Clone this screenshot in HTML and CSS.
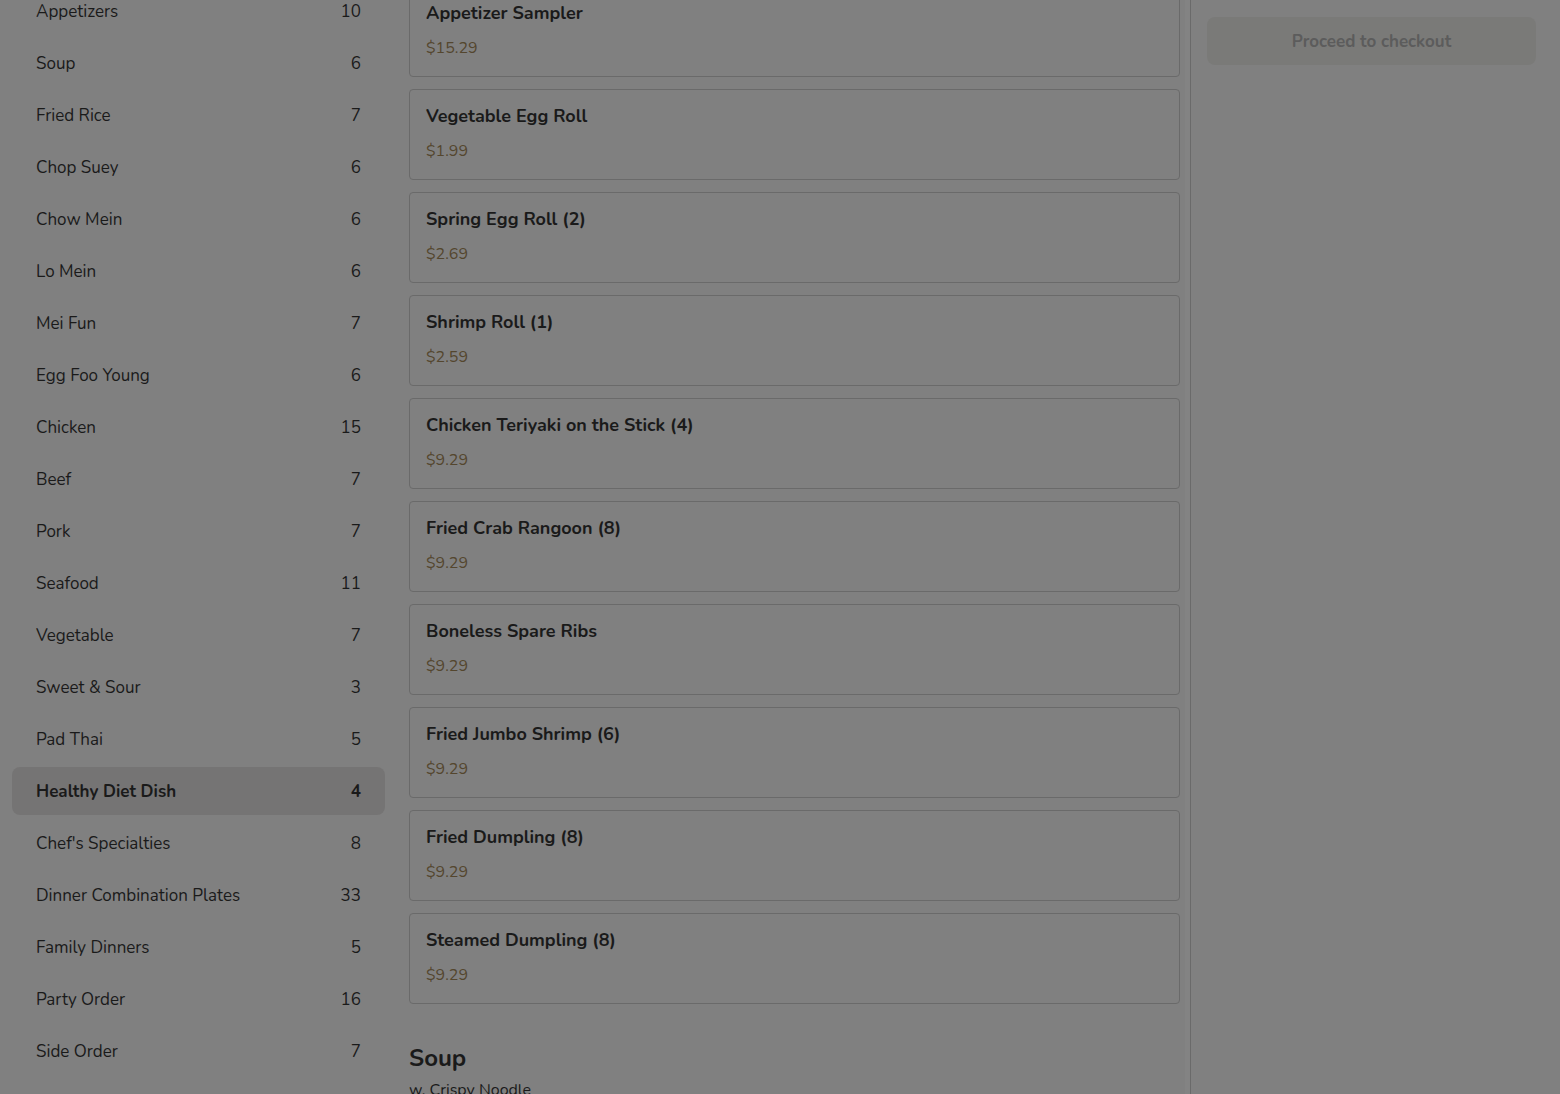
FILE: index.html
```html
<!DOCTYPE html>
<html>
<head>
<meta charset="utf-8">
<link rel="stylesheet" href="styles.css">
</head>
<body>
<div class="layout">
  <nav class="sidebar">
    <div class="cat"><span>Appetizers</span><span>10</span></div>
    <div class="cat"><span>Soup</span><span>6</span></div>
    <div class="cat"><span>Fried Rice</span><span>7</span></div>
    <div class="cat"><span>Chop Suey</span><span>6</span></div>
    <div class="cat"><span>Chow Mein</span><span>6</span></div>
    <div class="cat"><span>Lo Mein</span><span>6</span></div>
    <div class="cat"><span>Mei Fun</span><span>7</span></div>
    <div class="cat"><span>Egg Foo Young</span><span>6</span></div>
    <div class="cat"><span>Chicken</span><span>15</span></div>
    <div class="cat"><span>Beef</span><span>7</span></div>
    <div class="cat"><span>Pork</span><span>7</span></div>
    <div class="cat"><span>Seafood</span><span>11</span></div>
    <div class="cat"><span>Vegetable</span><span>7</span></div>
    <div class="cat"><span>Sweet &amp; Sour</span><span>3</span></div>
    <div class="cat"><span>Pad Thai</span><span>5</span></div>
    <div class="cat active"><span>Healthy Diet Dish</span><span>4</span></div>
    <div class="cat"><span>Chef's Specialties</span><span>8</span></div>
    <div class="cat"><span>Dinner Combination Plates</span><span>33</span></div>
    <div class="cat"><span>Family Dinners</span><span>5</span></div>
    <div class="cat"><span>Party Order</span><span>16</span></div>
    <div class="cat"><span>Side Order</span><span>7</span></div>
  </nav>
  <main class="menu">
    <div class="items">
      <div class="card"><div class="name">Appetizer Sampler</div><div class="price">$15.29</div></div>
      <div class="card"><div class="name">Vegetable Egg Roll</div><div class="price">$1.99</div></div>
      <div class="card"><div class="name">Spring Egg Roll (2)</div><div class="price">$2.69</div></div>
      <div class="card"><div class="name">Shrimp Roll (1)</div><div class="price">$2.59</div></div>
      <div class="card"><div class="name">Chicken Teriyaki on the Stick (4)</div><div class="price">$9.29</div></div>
      <div class="card"><div class="name">Fried Crab Rangoon (8)</div><div class="price">$9.29</div></div>
      <div class="card"><div class="name">Boneless Spare Ribs</div><div class="price">$9.29</div></div>
      <div class="card"><div class="name">Fried Jumbo Shrimp (6)</div><div class="price">$9.29</div></div>
      <div class="card"><div class="name">Fried Dumpling (8)</div><div class="price">$9.29</div></div>
      <div class="card"><div class="name">Steamed Dumpling (8)</div><div class="price">$9.29</div></div>
    </div>
    <h2 class="section">Soup</h2>
    <p class="section-note">w. Crispy Noodle</p>
  </main>
  <div class="track"></div>
  <aside class="cart">
    <button class="checkout">Proceed to checkout</button>
  </aside>
</div>
</body>
</html>
```
FILE: styles.css
```css
html, body {
  margin: 0;
  padding: 0;
  height: 100%;
  overflow: hidden;
}
body {
  background: #808080;
  font-family: "Nunito", "Lato", "Open Sans", sans-serif;
  color: #1a1a1a;
}
.layout {
  display: flex;
  height: 1094px;
  align-items: flex-start;
}
.sidebar {
  width: 373px;
  margin-left: 12px;
  margin-top: -13px;
  display: flex;
  flex-direction: column;
  gap: 4px;
  flex-shrink: 0;
}
.cat {
  height: 48px;
  display: flex;
  align-items: center;
  justify-content: space-between;
  padding: 0 24px;
  font-size: 17px;
  border-radius: 8px;
}
.cat.active {
  background: #757474;
  font-weight: 700;
}
.menu {
  width: 771px;
  margin-left: 24px;
  margin-top: -14px;
  flex-shrink: 0;
}
.items {
  display: flex;
  flex-direction: column;
  gap: 12px;
}
.card {
  border: 1px solid #6a6a6a;
  border-radius: 4px;
  padding: 14px 16px 16px;
}
.name {
  font-size: 18px;
  font-weight: 700;
  line-height: 24px;
  margin-bottom: 11px;
}
.price {
  font-size: 16px;
  line-height: 24px;
  color: #54462e;
}
.section {
  margin: 38px 0 0;
  font-size: 24px;
  line-height: 32px;
  font-weight: 700;
}
.section-note {
  margin: 5px 0 0;
  font-size: 16px;
  line-height: 22px;
  white-space: nowrap;
}
.track {
  width: 5px;
  height: 1094px;
  margin-left: 5px;
  background: #838383;
  border-right: 1px solid #6a6a6a;
  flex-shrink: 0;
}
.cart {
  flex: 1;
  padding: 17px 24px 0 16px;
}
.checkout {
  width: 100%;
  height: 48px;
  border: none;
  border-radius: 8px;
  background: #7a7a78;
  color: #5c5c5c;
  font-family: inherit;
  font-size: 17px;
  font-weight: 700;
}
```
